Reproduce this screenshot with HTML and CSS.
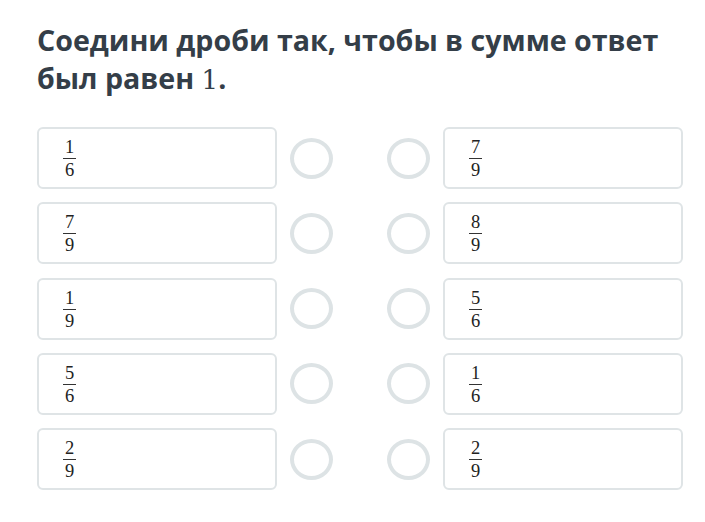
FILE: index.html
```html
<!DOCTYPE html>
<html lang="ru">
<head>
<meta charset="utf-8">
<link rel="stylesheet" href="styles.css">
</head>
<body>
<main class="page">
  <h1 class="title">Соедини дроби так, чтобы в сумме ответ был равен <span class="math">1</span>.</h1>
  <div class="board">
    <div class="col">
      <div class="pair"><div class="card"><span class="frac"><span class="num">1</span><span class="den">6</span></span></div><span class="dot"></span></div>
      <div class="pair"><div class="card"><span class="frac"><span class="num">7</span><span class="den">9</span></span></div><span class="dot"></span></div>
      <div class="pair"><div class="card"><span class="frac"><span class="num">1</span><span class="den">9</span></span></div><span class="dot"></span></div>
      <div class="pair"><div class="card"><span class="frac"><span class="num">5</span><span class="den">6</span></span></div><span class="dot"></span></div>
      <div class="pair"><div class="card"><span class="frac"><span class="num">2</span><span class="den">9</span></span></div><span class="dot"></span></div>
    </div>
    <div class="col">
      <div class="pair"><span class="dot"></span><div class="card"><span class="frac"><span class="num">7</span><span class="den">9</span></span></div></div>
      <div class="pair"><span class="dot"></span><div class="card"><span class="frac"><span class="num">8</span><span class="den">9</span></span></div></div>
      <div class="pair"><span class="dot"></span><div class="card"><span class="frac"><span class="num">5</span><span class="den">6</span></span></div></div>
      <div class="pair"><span class="dot"></span><div class="card"><span class="frac"><span class="num">1</span><span class="den">6</span></span></div></div>
      <div class="pair"><span class="dot"></span><div class="card"><span class="frac"><span class="num">2</span><span class="den">9</span></span></div></div>
    </div>
  </div>
</main>
</body>
</html>
```
FILE: styles.css
```css
html, body {
  margin: 0;
  padding: 0;
  background: #ffffff;
}
.page {
  padding: 21px 0 0 37px;
  font-family: "Open Sans", "Noto Sans", sans-serif;
  color: #343e48;
}
.title {
  margin: 0;
  width: 650px;
  font-size: 28.6px;
  line-height: 38px;
  font-weight: 700;
}
.math {
  font-family: "DejaVu Serif", "Liberation Serif", serif;
  font-weight: 400;
  font-size: 26px;
  line-height: 1;
}
.board {
  display: flex;
  gap: 54px;
  margin-top: 30px;
}
.col {
  display: flex;
  flex-direction: column;
  gap: 13.25px;
}
.pair {
  display: flex;
  align-items: center;
  gap: 13px;
}
.card {
  box-sizing: border-box;
  width: 240px;
  height: 62px;
  border: 2px solid #dfe4e6;
  border-radius: 6px;
  display: flex;
  align-items: center;
  padding-left: 24px;
}
.dot {
  box-sizing: border-box;
  width: 43px;
  height: 41px;
  border: 4px solid #dde3e5;
  border-radius: 50%;
  flex: none;
}
.frac {
  display: inline-flex;
  flex-direction: column;
  align-items: center;
  font-family: "Liberation Serif", "DejaVu Serif", serif;
  font-size: 18.5px;
  line-height: 18px;
  color: #222;
  margin-top: 1px;
}
.num {
  border-bottom: 1px solid #333;
  padding: 0 2px 2px;
}
.den {
  padding-top: 2px;
}
```
